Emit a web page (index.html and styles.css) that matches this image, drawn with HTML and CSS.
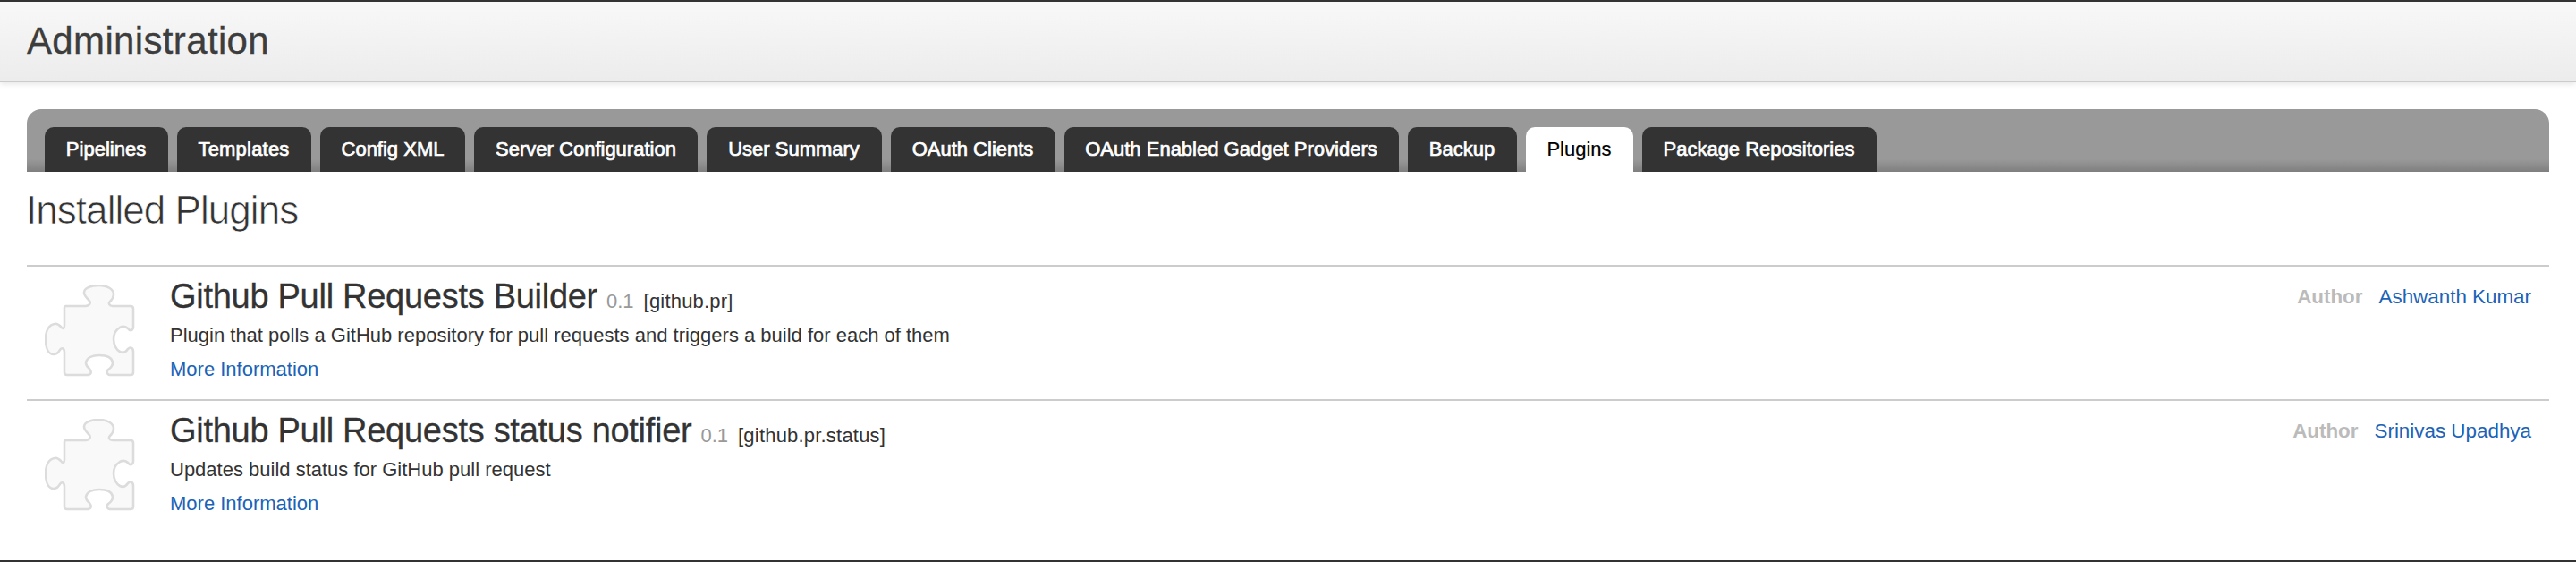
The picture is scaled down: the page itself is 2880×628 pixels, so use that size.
FILE: index.html
```html
<!DOCTYPE html>
<html lang="en">
<head>
<meta charset="utf-8">
<title>Administration</title>
<link rel="stylesheet" href="styles.css">
</head>
<body>
<svg class="defs" width="0" height="0" aria-hidden="true">
  <symbol id="puzzle" viewBox="0 0 102 104">
    <path d="M23 24 H46 C51 23 52 20 49 17 C46 14 44 12 44 9 C44 4 51 1 60.500 1 C70 1 77 5 77 11 C77 15 75 17 73 19 C71 21 72 24 76 24 H96 Q99 24 99 27 V48 C98 52 95 52 93 49 C90 46 86 47 84 48 C79 51 77 56 77 61 C77 67 80 73 84 75 C88 77 91 75 93 72 C96 69 99 71 99 75 V98 Q99 101 96 101 H74 C70 101 68 98 71 95 C74 93 76 91 76 87 C75 81 69 79 61 79 C53 79 47 82 46 87 C46 91 48 92 50 94 C53 98 52 101 47 101 H25 Q22 101 22 98 V76 C22 71 19 70 17 73 C15 76 14 78 10 78 C4 78 1 71 1 61 C1 51 5 45 11 44 C14 43 16 45 18 47 C20 50 22 49 22 46 V26 Q22 24 24 24 Z"/>
  </symbol>
</svg>
<div class="page">
  <header class="header"><h1 class="header-title">Administration</h1></header>
  <main class="content">
    <nav class="tabs">
      <a class="tab w-pipelines">Pipelines</a>
      <a class="tab w-templates">Templates</a>
      <a class="tab w-config">Config XML</a>
      <a class="tab w-server">Server Configuration</a>
      <a class="tab w-summary">User Summary</a>
      <a class="tab w-clients">OAuth Clients</a>
      <a class="tab w-gadgets">OAuth Enabled Gadget Providers</a>
      <a class="tab w-backup">Backup</a>
      <a class="tab w-plugins active">Plugins</a>
      <a class="tab w-packages">Package Repositories</a>
    </nav>
    <h2 class="section-title">Installed Plugins</h2>
    <ul class="plugins">
      <li class="plugin">
        <svg class="plugin-icon"><use href="#puzzle"/></svg>
        <div class="plugin-info">
          <div class="plugin-heading"><span class="plugin-name">Github Pull Requests Builder</span><span class="plugin-version">0.1</span><span class="plugin-id">[github.pr]</span></div>
          <div class="plugin-description">Plugin that polls a GitHub repository for pull requests and triggers a build for each of them</div>
          <a class="more">More Information</a>
        </div>
        <div class="author"><span class="author-label">Author</span><a class="author-name">Ashwanth Kumar</a></div>
      </li>
      <li class="plugin">
        <svg class="plugin-icon"><use href="#puzzle"/></svg>
        <div class="plugin-info">
          <div class="plugin-heading"><span class="plugin-name">Github Pull Requests status notifier</span><span class="plugin-version">0.1</span><span class="plugin-id">[github.pr.status]</span></div>
          <div class="plugin-description">Updates build status for GitHub pull request</div>
          <a class="more">More Information</a>
        </div>
        <div class="author"><span class="author-label">Author</span><a class="author-name">Srinivas Upadhya</a></div>
      </li>
    </ul>
  </main>
</div>
</body>
</html>
```
FILE: styles.css
```css
* { box-sizing: border-box; }
body {
  margin: 0;
  background: #fff;
  color: #333;
  font-family: "Liberation Sans", Arial, sans-serif;
  font-size: 22px;
}
.defs { display: block; }
.page {
  height: 628px;
  border-top: 2px solid #333;
  border-bottom: 2px solid #333;
  overflow: hidden;
}
.header {
  height: 90px;
  padding: 19px 30px 0;
  background: linear-gradient(#f8f8f8, #ececec);
  border-bottom: 2px solid #ccc;
  box-shadow: 0 2px 6px rgba(0, 0, 0, 0.1);
}
.header-title {
  margin: 0;
  font-size: 42px;
  font-weight: 400;
  line-height: 50px;
  letter-spacing: 0.35px;
  color: #3d3d3d;
  -webkit-text-stroke: 0.3px #3d3d3d;
}
.content { padding: 30px 30px 0; }
.tabs {
  display: flex;
  gap: 10px;
  height: 70px;
  padding: 20px 20px 0;
  border-radius: 16px 16px 0 0;
  background: linear-gradient(to bottom, #999 56px, #7f7f7f 70px);
}
.tab {
  height: 50px;
  border-radius: 10px 10px 0 0;
  background: #333;
  color: #fff;
  padding-right: 1px;
  line-height: 50px;
  text-align: center;
  white-space: nowrap;
  -webkit-text-stroke: 0.7px #fff;
}
.tab.active { background: #fff; color: #000; -webkit-text-stroke: 0.2px #000; }
.w-pipelines { width: 138px; }
.w-templates { width: 150px; letter-spacing: 0.2px; }
.w-config { width: 162px; padding-right: 0; }
.w-server { width: 250px; padding-right: 0; }
.w-summary { width: 196px; }
.w-clients { width: 184px; }
.w-gadgets { width: 374px; }
.w-backup { width: 122px; }
.w-plugins { width: 120px; }
.w-packages { width: 262px; }
.section-title {
  height: 104px;
  margin: 0;
  padding-top: 17px;
  font-size: 44px;
  font-weight: 400;
  line-height: 52px;
  letter-spacing: -0.95px;
  text-indent: -1px;
  -webkit-text-stroke: 0.7px #fff;
}
.plugins { margin: 0; padding: 0; list-style: none; }
.plugin {
  display: flex;
  height: 150px;
  padding: 20px 20px 0;
  border-top: 2px solid #ccc;
}
.plugin-icon {
  width: 102px;
  height: 104px;
  margin-right: 38px;
  fill: #f9f9f9;
  stroke: #dcdcdc;
  stroke-width: 2.6;
}
.plugin-info { flex: 1; white-space: nowrap; }
.plugin-heading { display: flex; align-items: baseline; height: 43px; margin-top: -9px; line-height: 44px; }
.plugin-name { font-size: 38px; letter-spacing: -0.28px; -webkit-text-stroke: 0.3px #333; }
.plugin-version { margin-left: 10px; color: #999; }
.plugin-id { margin-left: 11px; letter-spacing: 0.2px; }
.plugin-description { line-height: 26px; margin-top: 10px; }
.more { display: block; line-height: 26px; margin-top: 12px; color: #1c63b7; }
.author { display: flex; gap: 18px; padding-top: 1px; line-height: 26px; font-size: 22.4px; }
.author-label { color: #bbb; font-weight: 700; }
.author-name { color: #1c63b7; }
```
